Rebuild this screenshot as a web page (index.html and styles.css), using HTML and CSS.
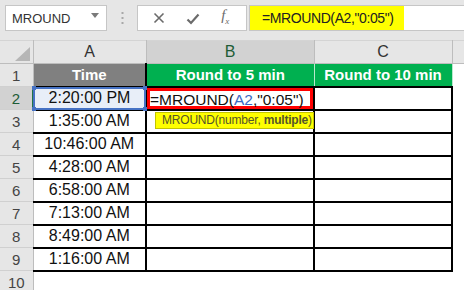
FILE: index.html
```html
<!DOCTYPE html>
<html lang="en">

<head>
    <title>MROUND</title>
    <link rel="stylesheet" href="styles.css">
</head>

<body>

    <div class="toolbar">
        <div class="namebox">
            <span>MROUND</span>
            <svg class="caret" width="8" height="5" viewBox="0 0 8 5"><path d="M0 0H8L4 5Z" fill="#7a7a7a"/></svg>
        </div>
        <div class="grip">
            <svg width="3" height="12" viewBox="0 0 3 12"><rect x="0.5" y="0" width="2" height="2" fill="#a8a8a8"/><rect x="0.5" y="5" width="2" height="2" fill="#a8a8a8"/><rect x="0.5" y="10" width="2" height="2" fill="#a8a8a8"/></svg>
        </div>
        <div class="buttons">
            <svg width="12" height="12" viewBox="0 0 12 12"><path d="M1.5 1.5L10.5 10.5M10.5 1.5L1.5 10.5" stroke="#6b6b6b" stroke-width="1.6"/></svg>
            <svg class="check" width="14" height="12" viewBox="0 0 14 12"><path d="M1.5 6.5L5 10L12.5 1.5" stroke="#6b6b6b" stroke-width="2.2" fill="none"/></svg>
            <span class="fx">f<sub>x</sub></span>
        </div>
        <div class="formula">
            <span class="hl">=MROUND(A2,"0:05")</span>
        </div>
    </div>

    <table class="sheet">
        <colgroup>
            <col style="width:33px">
            <col style="width:113px">
            <col style="width:168px">
            <col style="width:138px">
            <col>
        </colgroup>
        <tr class="colhead">
            <th class="corner"><span class="tri"></span></th>
            <th>A</th>
            <th class="active">B</th>
            <th>C</th>
            <th class="rest"></th>
        </tr>
        <tr>
            <td class="rh">1</td>
            <td class="title grey">Time</td>
            <td class="title green">Round to 5 min</td>
            <td class="title green">Round to 10 min</td>
            <td></td>
        </tr>
        <tr>
            <td class="rh current">2</td>
            <td class="d first sel">2:20:00 PM<span class="range"><i class="h tl"></i><i class="h tr"></i><i class="h bl"></i><i class="h br"></i></span></td>
            <td class="d edit">
                <span class="redbox">=MROUND(<span class="ref">A2</span>,"0:05")</span>
                <span class="tip">MROUND(number, <b>multiple</b>)</span>
            </td>
            <td class="d"></td>
            <td></td>
        </tr>
        <tr>
            <td class="rh">3</td>
            <td class="d first">1:35:00 AM</td>
            <td class="d"></td>
            <td class="d"></td>
            <td></td>
        </tr>
        <tr>
            <td class="rh">4</td>
            <td class="d first">10:46:00 AM</td>
            <td class="d"></td>
            <td class="d"></td>
            <td></td>
        </tr>
        <tr>
            <td class="rh">5</td>
            <td class="d first">4:28:00 AM</td>
            <td class="d"></td>
            <td class="d"></td>
            <td></td>
        </tr>
        <tr>
            <td class="rh">6</td>
            <td class="d first">6:58:00 AM</td>
            <td class="d"></td>
            <td class="d"></td>
            <td></td>
        </tr>
        <tr>
            <td class="rh">7</td>
            <td class="d first">7:13:00 AM</td>
            <td class="d"></td>
            <td class="d"></td>
            <td></td>
        </tr>
        <tr>
            <td class="rh">8</td>
            <td class="d first">8:49:00 AM</td>
            <td class="d"></td>
            <td class="d"></td>
            <td></td>
        </tr>
        <tr>
            <td class="rh">9</td>
            <td class="d first">1:16:00 AM</td>
            <td class="d"></td>
            <td class="d"></td>
            <td></td>
        </tr>
        <tr>
            <td class="rh">10</td>
            <td></td>
            <td></td>
            <td></td>
            <td></td>
        </tr>
    </table>

</body>

</html>
```

FILE: styles.css
```css
body {
    margin: 0;
    font-family: "Liberation Sans", Arial, sans-serif;
    background-color: #fff;
    width: 464px;
    height: 290px;
    overflow: hidden;
}

/* formula bar */
.toolbar {
    display: flex;
    align-items: flex-start;
    height: 40px;
    box-sizing: border-box;
    padding: 5px 0 0 5px;
    background-color: #e6e6e6;
}

.namebox {
    width: 102px;
    height: 26px;
    box-sizing: border-box;
    border: 1px solid #c6c6c6;
    background-color: #fff;
    display: flex;
    align-items: center;
    justify-content: space-between;
    padding: 0 7px 0 6px;
    font-size: 13px;
    color: #333;
}

.caret {
    margin-top: -6px;
}

.grip {
    width: 30px;
    height: 26px;
    display: flex;
    justify-content: center;
    align-items: center;
}

.buttons {
    width: 110px;
    height: 26px;
    box-sizing: border-box;
    border: 1px solid #c6c6c6;
    background-color: #fff;
    display: flex;
    align-items: center;
    justify-content: space-around;
    padding: 0 6px 0 4px;
}

.check {
    margin-top: 2px;
}

.fx {
    font-family: "Liberation Serif", serif;
    font-style: italic;
    font-size: 15px;
    color: #6b6b6b;
    margin-top: -3px;
}

.fx sub {
    font-size: 9px;
}

.formula {
    flex: 1;
    height: 26px;
    margin-left: 2px;
    box-sizing: border-box;
    border: 1px solid #c6c6c6;
    border-right: none;
    background-color: #fff;
}

.hl {
    display: block;
    width: 154px;
    height: 24px;
    box-sizing: border-box;
    background-color: #ffff00;
    padding-left: 12px;
    line-height: 24px;
    font-size: 14px;
    letter-spacing: -0.4px;
    color: #222;
}

/* grid */
.sheet {
    border-collapse: collapse;
    table-layout: fixed;
    width: 464px;
}

.sheet td,
.sheet th {
    padding: 0;
    white-space: nowrap;
    overflow: visible;
}

.colhead th {
    height: 22px;
    background-color: #e6e6e6;
    border-top: 1px solid #d4d4d4;
    border-right: 1px solid #bdbdbd;
    border-bottom: 1px solid #bdbdbd;
    font-weight: normal;
    font-size: 16px;
    color: #333;
}

.colhead th.active {
    background-color: #d2d2d2;
    color: #1d5c36;
}

.colhead th.rest {
    border-right: none;
}

.corner {
    position: relative;
}

.tri {
    position: absolute;
    right: 3px;
    bottom: 2px;
    width: 0;
    height: 0;
    border-left: 15px solid transparent;
    border-bottom: 14px solid #b6b6b6;
}

.sheet tr {
    height: 23px;
}

.rh {
    background-color: #e6e6e6;
    border-right: 1px solid #bdbdbd;
    border-bottom: 1px solid #d0d0d0;
    text-align: center;
    font-size: 15px;
    color: #444;
}

.rh.current {
    background-color: #d2d2d2;
    color: #1d5c36;
    border-right: 2px solid #217346;
}

.title {
    text-align: center;
    font-weight: bold;
    font-size: 15px;
    color: #fff;
}

.grey {
    background-color: #808080;
    border-right: 2px solid #000;
}

.green {
    background-color: #00b050;
    border-right: 1px solid #b9e8cc;
}

.d {
    border: 2px solid #000;
    text-align: center;
    font-size: 16px;
    color: #111;
}

.d.first {
    border-left: none;
}

.sel {
    position: relative;
    background-color: #e8eef8;
}

.range {
    position: absolute;
    left: -1px;
    top: -1px;
    right: -1px;
    bottom: -1px;
    border: 2px solid #4672c4;
}

.h {
    position: absolute;
    width: 4px;
    height: 4px;
    background-color: #4672c4;
}

.h.tl { left: -3px; top: -3px; }
.h.tr { right: -3px; top: -3px; }
.h.bl { left: -3px; bottom: -3px; }
.h.br { right: -3px; bottom: -3px; }

.edit {
    position: relative;
}

.redbox {
    position: absolute;
    left: 0;
    top: 0;
    right: 0;
    bottom: 0;
    border: 3px solid #ff0000;
    text-align: left;
    font-size: 15.5px;
    line-height: 17px;
    color: #111;
}

.ref {
    color: #3b69c3;
}

.tip {
    position: absolute;
    left: 8px;
    top: 24px;
    width: 159px;
    height: 17px;
    box-sizing: border-box;
    background-color: #ffff00;
    border: 1px solid #c4c400;
    padding-left: 6px;
    text-align: left;
    font-size: 12px;
    line-height: 15px;
    letter-spacing: -0.2px;
    color: #55552a;
}
```
